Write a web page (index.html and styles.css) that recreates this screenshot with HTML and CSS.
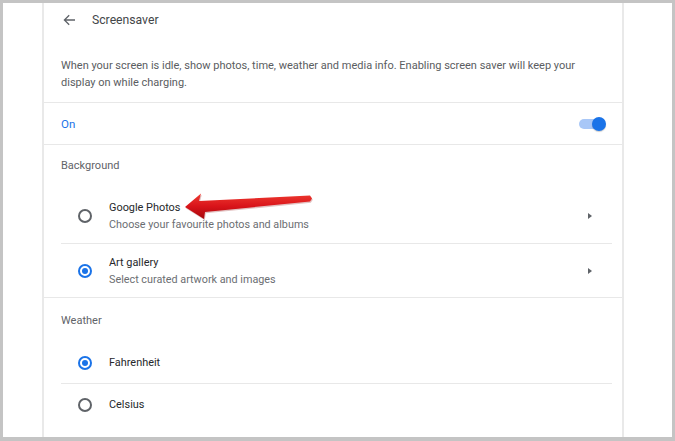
FILE: index.html
```html
<!DOCTYPE html>
<html>
<head>
<meta charset="utf-8">
<link rel="stylesheet" href="styles.css">
</head>
<body>
<div class="frame">
  <div class="gutter-left"></div>
  <div class="card">
    <div class="header">
      <svg class="back" width="14" height="14" viewBox="0 0 14 14"><path d="M13 7H2.5M7.2 2.2L2.4 7l4.8 4.8" fill="none" stroke="#5f6368" stroke-width="1.3"/></svg>
      <span class="title">Screensaver</span>
    </div>
    <div class="desc">When your screen is idle, show photos, time, weather and media info. Enabling screen saver will keep your display on while charging.</div>
    <div class="sep"></div>
    <div class="on-row">
      <span class="on">On</span>
      <span class="toggle"><span class="track"></span><span class="knob"></span></span>
    </div>
    <div class="sep"></div>
    <div class="sec-head bg-head">Background</div>
    <div class="row two gp">
      <span class="radio"></span>
      <div class="texts">
        <div class="primary">Google Photos</div>
        <div class="secondary">Choose your favourite photos and albums</div>
      </div>
      <span class="tri"></span>
    </div>
    <div class="sep inset"></div>
    <div class="row two art">
      <span class="radio checked"></span>
      <div class="texts">
        <div class="primary">Art gallery</div>
        <div class="secondary">Select curated artwork and images</div>
      </div>
      <span class="tri"></span>
    </div>
    <div class="sep"></div>
    <div class="sec-head w-head">Weather</div>
    <div class="row one">
      <span class="radio checked"></span>
      <div class="primary">Fahrenheit</div>
    </div>
    <div class="sep inset"></div>
    <div class="row one">
      <span class="radio"></span>
      <div class="primary">Celsius</div>
    </div>
  </div>
  <div class="gutter-right"></div>
  <svg class="pointer" width="140" height="36" viewBox="180 188 140 36">
    <defs>
      <linearGradient id="rg" x1="0" y1="0" x2="0" y2="1">
        <stop offset="0" stop-color="#ee3a30"/>
        <stop offset="0.5" stop-color="#d9141a"/>
        <stop offset="1" stop-color="#a5060b"/>
      </linearGradient>
    </defs>
    <polygon points="185,207 201,193.5 199,201 310,195.5 312,198.5 310,201.5 205,212 204,219" fill="#8a0a0a" opacity="0.25" transform="translate(0.8,1.2)"/>
    <polygon points="185,207 201,193.5 199,201 310,195.5 312,198.5 310,201.5 205,212 204,219" fill="url(#rg)"/>
  </svg>
</div>
</body>
</html>
```
FILE: styles.css
```css
* { box-sizing: border-box; }
html, body { margin: 0; padding: 0; background: #fff; }
body { font-family: Roboto, "Noto Sans", Arial, sans-serif; }
.frame {
  position: relative;
  width: 675px;
  height: 441px;
  border: 3px solid #c4c4c4;
  border-bottom-width: 4px;
  display: flex;
  overflow: hidden;
}
.gutter-left { width: 39px; flex: none; }
.gutter-right { width: 48px; flex: none; }
.card {
  width: 582px;
  flex: none;
  border-left: 2px solid #e9e9e9;
  border-right: 2px solid #e9e9e9;
  display: flex;
  flex-direction: column;
}
.header {
  height: 34px;
  display: flex;
  align-items: center;
  padding-left: 18px;
}
.back { display: block; }
.title {
  margin-left: 16px;
  font-size: 12.2px;
  color: #444649;
}
.desc {
  padding: 20px 30px 11px 17px;
  font-size: 11px;
  line-height: 17px;
  color: #5a5d61;
  height: 65px;
}
.sep { height: 1px; background: #e8e8e8; flex: none; }
.sep.inset { margin: 0 10px 0 17px; }
.on-row {
  height: 41px;
  display: flex;
  align-items: center;
  justify-content: space-between;
  padding: 0 16px 0 17px;
}
.on { color: #1a73e8; font-size: 11.5px; }
.toggle { position: relative; width: 27px; height: 14px; display: block; }
.track {
  position: absolute; left: 0; top: 2px;
  width: 24px; height: 10px; border-radius: 5px;
  background: #a8c7f7;
}
.knob {
  position: absolute; right: 0; top: 0;
  width: 14px; height: 14px; border-radius: 50%;
  background: #1a73e8;
  box-shadow: 0 1px 1px rgba(0,0,0,0.2);
}
.sec-head {
  padding-left: 17px;
  font-size: 11px;
  color: #5f6368;
  display: flex;
  align-items: center;
}
.bg-head { height: 40px; }
.w-head { height: 44px; }
.row {
  display: flex;
  align-items: center;
  padding-left: 34px;
  padding-right: 30px;
}
.row.two.gp { height: 58px; padding-top: 3px; }
.row.two.art { height: 53px; }
.row.one { height: 41px; }
.radio {
  width: 14px; height: 14px;
  border-radius: 50%;
  border: 2px solid #5f6368;
  flex: none;
  margin-right: 17px;
  position: relative;
}
.radio.checked { border-color: #1a73e8; }
.radio.checked::after {
  content: "";
  position: absolute;
  left: 2px; top: 2px;
  width: 6px; height: 6px;
  border-radius: 50%;
  background: #1a73e8;
}
.texts { flex: 1; }
.primary { font-size: 10.9px; line-height: 17px; color: #26282b; }
.secondary { font-size: 10.8px; line-height: 17px; color: #6b6e72; }
.tri {
  width: 0; height: 0;
  border-top: 3.5px solid transparent;
  border-bottom: 3.5px solid transparent;
  border-left: 4px solid #5f6368;
  flex: none;
}
.pointer {
  position: absolute;
  left: 177px;
  top: 185px;
  pointer-events: none;
}
```
